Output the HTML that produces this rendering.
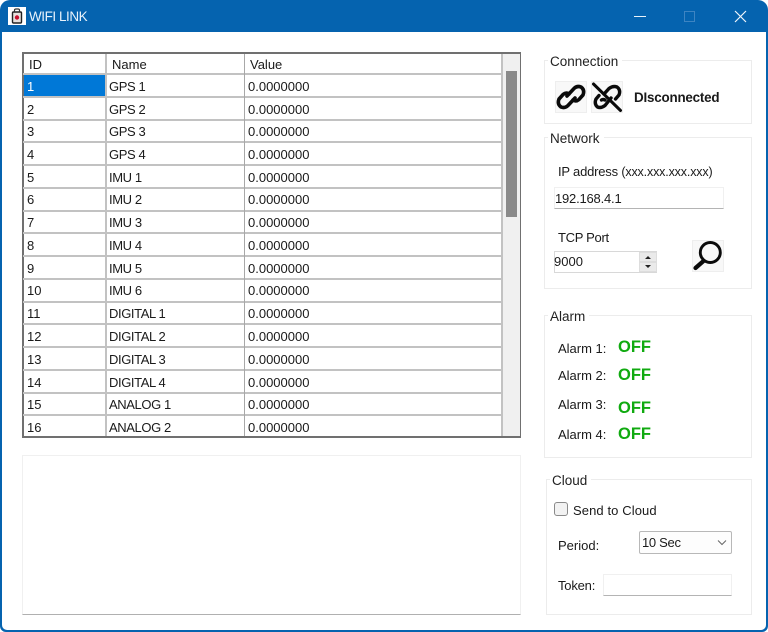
<!DOCTYPE html>
<html><head><meta charset="utf-8">
<style>
html,body{margin:0;padding:0;background:#fff}
body{width:768px;height:632px;position:relative;overflow:hidden;font-family:"Liberation Sans",sans-serif;font-size:13px;color:#1a1a1a}
.a{position:absolute;white-space:nowrap}
.t{position:absolute;white-space:nowrap;line-height:16px}
.h{position:absolute;background:#c2c2c2;height:2px;left:23px;width:478px}
.v{position:absolute;background:#c2c2c2;width:2px}
.gb{position:absolute;border:1px solid #ececec;box-sizing:border-box}
.lg{position:absolute;background:#fff;padding:0 4px 0 2px;line-height:16px;white-space:nowrap;font-size:13.5px;color:#222}
.btn{position:absolute;background:#f8f8f8;border:1px solid #eee;box-sizing:border-box}
.off{position:absolute;color:#10aa10;font-weight:bold;font-size:16.5px;line-height:20px}
.n{letter-spacing:-.4px}
</style></head><body>
<div class="a" style="left:0;top:0;width:768px;height:632px;background:#0563af;border-radius:10px 10px 6px 6px"></div>
<div class="a" style="left:2px;top:32px;width:764px;height:598px;background:#fff;border-radius:0 0 5px 5px"></div>

<!-- title bar -->
<svg class="a" style="left:8px;top:7px" width="18" height="18" viewBox="0 0 18 18">
<rect width="18" height="18" fill="#fff"/>
<rect x="4.5" y="5" width="9" height="11" rx="1" fill="#e8e0dc" stroke="#222" stroke-width="1.4"/>
<path d="M6.500 5V3.200Q6.500 2 8 2h2q1.500 0 1.500 1.200V5" fill="none" stroke="#333" stroke-width="1.200"/>
<circle cx="9" cy="10.500" r="2.200" fill="#c8102e"/>
</svg>
<div class="t" style="left:29px;top:9px;color:#e8f2fb;font-size:13.500px;letter-spacing:-.45px">WIFI LINK</div>
<div class="a" style="left:634px;top:15.500px;width:12px;height:1.500px;background:#e8f2fb"></div>
<div class="a" style="left:684px;top:11px;width:9px;height:9px;border:1px solid #3d84c2"></div>
<svg class="a" style="left:734px;top:10px" width="13" height="13" viewBox="0 0 13 13"><path d="M1 1L12 12M12 1L1 12" stroke="#f0f6fb" stroke-width="1.200"/></svg>

<!-- table -->
<div class="a" style="left:22px;top:52px;width:499px;height:386px;box-sizing:border-box;border:2px solid #707070;border-right-width:1px;background:#fff"></div>
<div class="a" style="left:503px;top:54px;width:17px;height:382px;background:#f0f0f0"></div>
<div class="a" style="left:506px;top:71px;width:11px;height:146px;background:#8a8a8a"></div>
<div class="a" style="left:24px;top:75px;width:81px;height:21px;background:#0078d7"></div>
<div class="h" style="top:73px"></div><div class="h" style="top:96px"></div><div class="h" style="top:119px"></div><div class="h" style="top:141px"></div><div class="h" style="top:164px"></div><div class="h" style="top:187px"></div><div class="h" style="top:210px"></div><div class="h" style="top:232px"></div><div class="h" style="top:255px"></div><div class="h" style="top:278px"></div><div class="h" style="top:301px"></div><div class="h" style="top:323px"></div><div class="h" style="top:346px"></div><div class="h" style="top:369px"></div><div class="h" style="top:392px"></div><div class="h" style="top:414px"></div>
<div class="v" style="left:105px;top:54px;height:382px"></div>
<div class="v" style="left:244px;top:54px;height:382px;width:1px;background:#a8a8a8"></div>
<div class="v" style="left:501px;top:54px;height:382px"></div>

<div class="t" style="left:29px;top:57px">ID</div><div class="t" style="left:112px;top:57px">Name</div><div class="t" style="left:250px;top:57px">Value</div>

<div class="t" style="left:27px;top:79px;color:#fff">1</div><div class="t n" style="left:109px;top:79px">GPS 1</div><div class="t" style="left:248px;top:79px">0.0000000</div>
<div class="t" style="left:27px;top:102px">2</div><div class="t n" style="left:109px;top:102px">GPS 2</div><div class="t" style="left:248px;top:102px">0.0000000</div>
<div class="t" style="left:27px;top:124px">3</div><div class="t n" style="left:109px;top:124px">GPS 3</div><div class="t" style="left:248px;top:124px">0.0000000</div>
<div class="t" style="left:27px;top:147px">4</div><div class="t n" style="left:109px;top:147px">GPS 4</div><div class="t" style="left:248px;top:147px">0.0000000</div>
<div class="t" style="left:27px;top:170px">5</div><div class="t n" style="left:109px;top:170px">IMU 1</div><div class="t" style="left:248px;top:170px">0.0000000</div>
<div class="t" style="left:27px;top:192px">6</div><div class="t n" style="left:109px;top:192px">IMU 2</div><div class="t" style="left:248px;top:192px">0.0000000</div>
<div class="t" style="left:27px;top:215px">7</div><div class="t n" style="left:109px;top:215px">IMU 3</div><div class="t" style="left:248px;top:215px">0.0000000</div>
<div class="t" style="left:27px;top:238px">8</div><div class="t n" style="left:109px;top:238px">IMU 4</div><div class="t" style="left:248px;top:238px">0.0000000</div>
<div class="t" style="left:27px;top:261px">9</div><div class="t n" style="left:109px;top:261px">IMU 5</div><div class="t" style="left:248px;top:261px">0.0000000</div>
<div class="t" style="left:27px;top:283px">10</div><div class="t n" style="left:109px;top:283px">IMU 6</div><div class="t" style="left:248px;top:283px">0.0000000</div>
<div class="t" style="left:27px;top:306px">11</div><div class="t n" style="left:109px;top:306px">DIGITAL 1</div><div class="t" style="left:248px;top:306px">0.0000000</div>
<div class="t" style="left:27px;top:329px">12</div><div class="t n" style="left:109px;top:329px">DIGITAL 2</div><div class="t" style="left:248px;top:329px">0.0000000</div>
<div class="t" style="left:27px;top:352px">13</div><div class="t n" style="left:109px;top:352px">DIGITAL 3</div><div class="t" style="left:248px;top:352px">0.0000000</div>
<div class="t" style="left:27px;top:375px">14</div><div class="t n" style="left:109px;top:375px">DIGITAL 4</div><div class="t" style="left:248px;top:375px">0.0000000</div>
<div class="t" style="left:27px;top:397px">15</div><div class="t n" style="left:109px;top:397px">ANALOG 1</div><div class="t" style="left:248px;top:397px">0.0000000</div>
<div class="t" style="left:27px;top:420px">16</div><div class="t n" style="left:109px;top:420px">ANALOG 2</div><div class="t" style="left:248px;top:420px">0.0000000</div>

<!-- log box -->
<div class="a" style="left:22px;top:455px;width:499px;height:160px;box-sizing:border-box;border:1px solid #f0f0f0;border-bottom:1px solid #b0b0b0"></div>

<!-- Connection -->
<div class="gb" style="left:544px;top:60px;width:208px;height:64px"></div>
<div class="lg" style="left:548px;top:54px">Connection</div>
<div class="btn" style="left:555px;top:81px;width:32px;height:32px"></div>
<div class="btn" style="left:591px;top:81px;width:32px;height:32px"></div>
<svg class="a" style="left:555px;top:81px" width="32" height="32" viewBox="0 0 32 32" fill="none" stroke="#0a0a0a" stroke-width="3.600" stroke-linecap="round">
<path d="M12 15L19 7.500Q22 4.500 26 6Q30 9 28 14L24 18.500Q21 21 18 19"/>
<path d="M20 17L13 24.500Q10 27.500 6 26Q2 23 4 18L8 13.500Q11 11 14 13"/>
</svg>
<svg class="a" style="left:591px;top:81px" width="32" height="32" viewBox="0 0 32 32" fill="none" stroke="#0a0a0a" stroke-width="3.400" stroke-linecap="round">
<path d="M13 13L18 7.500Q22 4.500 26 6Q30 9 28 14L24.500 18"/>
<path d="M20 17L14 24.500Q10 27.500 6.500 26Q3 23 5 18L8 14.500"/>
<path d="M14 19Q12 18 10.500 19"/>
<path d="M2.500 3L29.500 29.500" stroke-width="3"/>
</svg>
<div class="t" style="left:634px;top:90px;font-weight:bold;font-size:13.400px;letter-spacing:-.2px">DIsconnected</div>

<!-- Network -->
<div class="gb" style="left:544px;top:137px;width:208px;height:152px"></div>
<div class="lg" style="left:548px;top:131px">Network</div>
<div class="t" style="left:558px;top:164px;font-size:13px;letter-spacing:-.2px">IP address <span style="font-size:12.500px;letter-spacing:-.15px">(xxx.xxx.xxx.xxx)</span></div>
<div class="a" style="left:554px;top:187px;width:170px;height:22px;box-sizing:border-box;border:1px solid #f0f0f0;border-bottom:1px solid #b4b4b4"></div>
<div class="t" style="left:555px;top:191px;letter-spacing:-.2px">192.168.4.1</div>
<div class="t" style="left:558px;top:230px;letter-spacing:-.3px">TCP Port</div>
<div class="a" style="left:554px;top:251px;width:103px;height:22px;box-sizing:border-box;border:1px solid #d8d8d8"></div>
<div class="t" style="left:554px;top:254px">9000</div>
<div class="a" style="left:639px;top:252px;width:18px;height:10px;background:#eaeaea;border:1px solid #ddd;box-sizing:border-box"></div>
<div class="a" style="left:639px;top:262px;width:18px;height:10px;background:#eaeaea;border:1px solid #ddd;box-sizing:border-box"></div>
<svg class="a" style="left:644px;top:254px" width="8" height="16" viewBox="0 0 8 16"><path d="M4 2L7 5H1zM1 11H7L4 14z" fill="#222"/></svg>
<div class="btn" style="left:692px;top:240px;width:32px;height:32px"></div>
<svg class="a" style="left:692px;top:240px" width="32" height="32" viewBox="0 0 32 32" fill="none" stroke="#0a0a0a">
<circle cx="18.300" cy="12.500" r="10" stroke-width="2.900"/>
<path d="M11.500 21L3.500 28" stroke-width="4.200" stroke-linecap="round"/>
</svg>

<!-- Alarm -->
<div class="gb" style="left:544px;top:315px;width:208px;height:143px"></div>
<div class="lg" style="left:548px;top:309px">Alarm</div>
<div class="t" style="left:558px;top:341px">Alarm 1:</div><div class="off" style="left:618px;top:337px">OFF</div>
<div class="t" style="left:558px;top:368px">Alarm 2:</div><div class="off" style="left:618px;top:365px">OFF</div>
<div class="t" style="left:558px;top:397px">Alarm 3:</div><div class="off" style="left:618px;top:398px">OFF</div>
<div class="t" style="left:558px;top:427px">Alarm 4:</div><div class="off" style="left:618px;top:424px">OFF</div>

<!-- Cloud -->
<div class="gb" style="left:546px;top:479px;width:206px;height:136px"></div>
<div class="lg" style="left:550px;top:473px">Cloud</div>
<div class="a" style="left:554px;top:502px;width:14px;height:14px;box-sizing:border-box;border:1px solid #8a8a8a;border-radius:3px;background:#f2f2f2"></div>
<div class="t" style="left:573px;top:503px;letter-spacing:.1px">Send to Cloud</div>
<div class="t" style="left:558px;top:538px">Period:</div>
<div class="a" style="left:639px;top:531px;width:93px;height:23px;box-sizing:border-box;border:1px solid #b8b8b8;border-radius:2px;background:#fdfdfd"></div>
<div class="t" style="left:642px;top:535px;letter-spacing:-.3px">10 Sec</div>
<svg class="a" style="left:717px;top:539px" width="10" height="7" viewBox="0 0 10 7"><path d="M1 1.500L5 5.500L9 1.500" fill="none" stroke="#666" stroke-width="1"/></svg>
<div class="t" style="left:558px;top:578px;letter-spacing:-.2px">Token:</div>
<div class="a" style="left:603px;top:574px;width:129px;height:22px;box-sizing:border-box;border:1px solid #f0f0f0;border-bottom:1px solid #b4b4b4"></div>
</body></html>
